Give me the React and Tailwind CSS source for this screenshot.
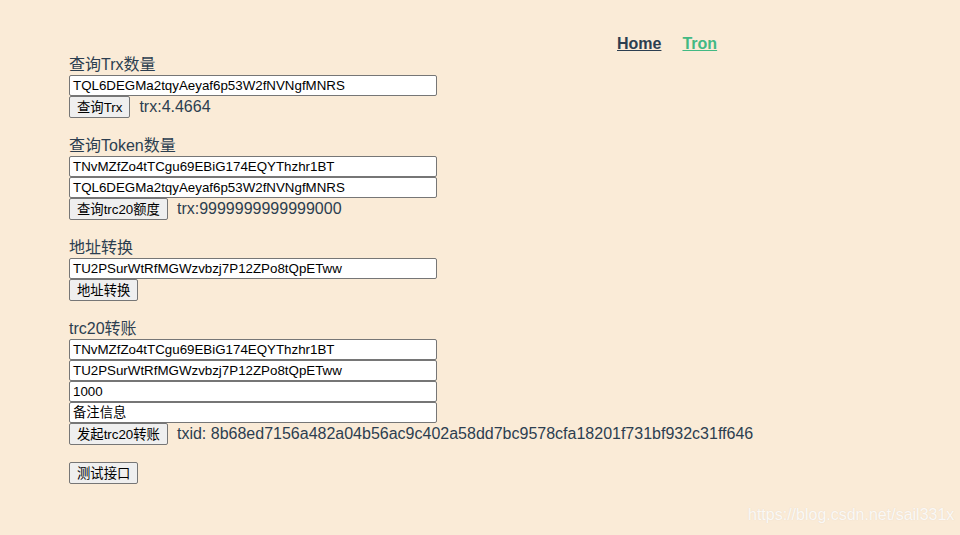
import React from "react";

const font = { fontFamily: '"Liberation Sans", Arial, "Noto Sans CJK SC", sans-serif' };

function Label({ children, first }) {
  return (
    <div className={`${first ? "" : "mt-[17px]"} h-[21px] text-[16px] leading-[21px] text-[#2c3e50]`}>
      {children}
    </div>
  );
}

function Field({ value }) {
  return (
    <div className="box-border flex h-[21px] w-[368px] items-center rounded-[2px] border border-[#767676] bg-white px-[3px] text-[13.33px] leading-[15px] text-black whitespace-nowrap overflow-hidden">
      {value}
    </div>
  );
}

function Btn({ children }) {
  return (
    <button className="box-border flex h-[22px] items-center rounded-[2px] border border-[#767676] bg-[#efefef] px-[7px] text-[13.33px] leading-[15px] text-black whitespace-nowrap">
      {children}
    </button>
  );
}

function Row({ btn, result }) {
  return (
    <div className="flex h-[22px] items-center">
      <Btn>{btn}</Btn>
      {result && (
        <span className="ml-[9px] text-[16px] leading-[18px] text-[#2c3e50] whitespace-nowrap">{result}</span>
      )}
    </div>
  );
}

export default function App() {
  return (
    <div className="relative min-h-screen w-full overflow-hidden bg-[#faebd7]" style={font}>
      <div className="pt-[35px]">
        <div className="ml-[617px] flex h-[19px] gap-[21px] text-[16px] font-bold leading-[18px]">
          <a className="text-[#2c3e50] underline">Home</a>
          <a className="text-[#42b983] underline">Tron</a>
        </div>
        <div className="ml-[69px]">
          <Label first>查询Trx数量</Label>
          <Field value="TQL6DEGMa2tqyAeyaf6p53W2fNVNgfMNRS" />
          <Row btn="查询Trx" result="trx:4.4664" />

          <Label>查询Token数量</Label>
          <Field value="TNvMZfZo4tTCgu69EBiG174EQYThzhr1BT" />
          <Field value="TQL6DEGMa2tqyAeyaf6p53W2fNVNgfMNRS" />
          <Row btn="查询trc20额度" result="trx:9999999999999000" />

          <Label>地址转换</Label>
          <Field value="TU2PSurWtRfMGWzvbzj7P12ZPo8tQpETww" />
          <Row btn="地址转换" />

          <Label>trc20转账</Label>
          <Field value="TNvMZfZo4tTCgu69EBiG174EQYThzhr1BT" />
          <Field value="TU2PSurWtRfMGWzvbzj7P12ZPo8tQpETww" />
          <Field value="1000" />
          <Field value="备注信息" />
          <Row btn="发起trc20转账" result="txid: 8b68ed7156a482a04b56ac9c402a58dd7bc9578cfa18201f731bf932c31ff646" />

          <div className="mt-[17px]">
            <Row btn="测试接口" />
          </div>
        </div>
      </div>
      <div className="absolute left-[748px] top-[506px] text-[16px] leading-[18px] text-[rgba(255,255,255,0.85)] [text-shadow:0_0_1px_rgba(180,170,160,0.35)] whitespace-nowrap">
        https://blog.csdn.net/sail331x
      </div>
    </div>
  );
}
